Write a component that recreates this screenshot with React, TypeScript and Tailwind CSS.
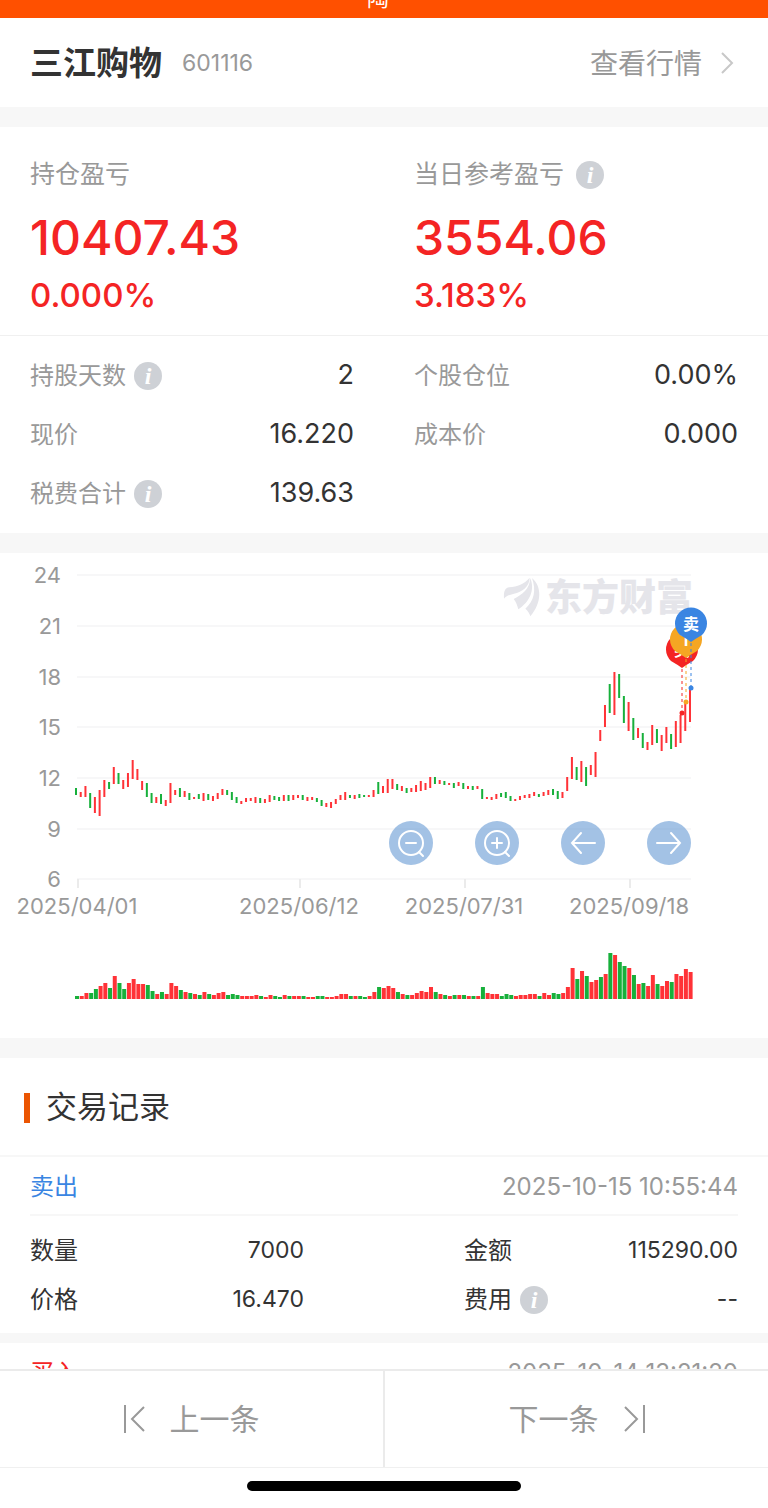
import type { ReactNode } from 'react'

type Trend = 'r' | 'g'

// [trend, high, low] for each trading day, in chart units
const CANDLES: [Trend, number, number][] = [
  ['g', 788, 795], ['r', 792, 797], ['r', 786, 797], ['g', 793, 808], ['r', 797, 813], ['r', 790, 816],
  ['r', 780, 797], ['g', 782, 789], ['r', 767, 784], ['g', 773, 784], ['r', 780, 789], ['r', 773, 787],
  ['r', 760, 779], ['r', 769, 780], ['r', 781, 790], ['g', 783, 797], ['g', 793, 803], ['r', 797, 803],
  ['g', 794, 804], ['r', 800, 806], ['r', 783, 803], ['r', 790, 795], ['g', 788, 797], ['r', 791, 797],
  ['g', 793, 800], ['r', 797, 799], ['g', 794, 799], ['r', 793, 801], ['g', 794, 800], ['r', 796, 801],
  ['r', 793, 799], ['r', 789, 795], ['g', 790, 795], ['g', 792, 800], ['g', 797, 803], ['r', 801, 804],
  ['r', 798, 802], ['r', 798, 801], ['r', 797, 803], ['g', 798, 803], ['r', 799, 803], ['r', 795, 802],
  ['g', 796, 800], ['g', 797, 801], ['r', 795, 801], ['g', 795, 801], ['r', 795, 800], ['r', 795, 798],
  ['g', 795, 800], ['r', 797, 801], ['r', 797, 800], ['g', 798, 802], ['g', 800, 806], ['r', 803, 807],
  ['r', 802, 808], ['r', 799, 804], ['r', 795, 800], ['r', 792, 800], ['g', 795, 798], ['r', 795, 799],
  ['g', 794, 798], ['g', 795, 797], ['r', 795, 797], ['r', 790, 797], ['g', 782, 794], ['r', 786, 793],
  ['r', 779, 793], ['r', 779, 789], ['g', 784, 790], ['r', 786, 791], ['g', 788, 793], ['r', 788, 792],
  ['r', 785, 792], ['r', 781, 791], ['r', 783, 790], ['r', 777, 788], ['g', 777, 784], ['r', 780, 784],
  ['g', 781, 785], ['r', 783, 785], ['g', 783, 788], ['r', 782, 786], ['g', 783, 789], ['r', 786, 789],
  ['g', 786, 790], ['r', 786, 789], ['g', 789, 799], ['r', 797, 799], ['r', 797, 800], ['r', 794, 799],
  ['g', 793, 797], ['g', 792, 798], ['g', 796, 801], ['r', 799, 801], ['r', 796, 800], ['r', 795, 798],
  ['r', 794, 798], ['r', 792, 796], ['g', 794, 797], ['r', 792, 796], ['r', 790, 795], ['g', 789, 795],
  ['g', 791, 799], ['r', 792, 798], ['r', 777, 791], ['r', 757, 779], ['g', 767, 780], ['r', 761, 782],
  ['g', 767, 786], ['r', 765, 775], ['r', 752, 777], ['r', 730, 741], ['r', 705, 727], ['g', 684, 713],
  ['r', 672, 715], ['g', 674, 698], ['g', 696, 723], ['r', 702, 731], ['g', 718, 740], ['r', 728, 738],
  ['g', 733, 748], ['r', 742, 750], ['r', 725, 745], ['g', 729, 743], ['r', 735, 751], ['r', 727, 743],
  ['g', 734, 749], ['r', 721, 747], ['r', 715, 743], ['r', 702, 731], ['r', 688, 722],
]

// [trend, volume] for each trading day
const VOLUMES: [Trend, number][] = [
  ['g', 3], ['r', 3], ['r', 6], ['g', 6], ['g', 10], ['r', 13], ['r', 16], ['g', 11], ['r', 23], ['g', 16],
  ['g', 10], ['r', 16], ['r', 20], ['r', 15], ['r', 15], ['g', 14], ['g', 8], ['r', 5], ['g', 7], ['r', 5],
  ['r', 16], ['r', 13], ['g', 9], ['r', 7], ['g', 6], ['r', 5], ['g', 4], ['r', 7], ['g', 5], ['r', 4],
  ['r', 6], ['r', 7], ['g', 4], ['g', 5], ['g', 4], ['r', 3], ['r', 3], ['r', 3], ['r', 4], ['g', 3],
  ['r', 2], ['r', 4], ['g', 3], ['g', 2], ['r', 4], ['g', 3], ['r', 3], ['r', 3], ['g', 3], ['r', 2],
  ['r', 2], ['g', 3], ['g', 3], ['r', 2], ['r', 2], ['r', 3], ['r', 5], ['r', 5], ['g', 3], ['r', 3],
  ['g', 3], ['g', 2], ['r', 3], ['r', 7], ['g', 12], ['r', 11], ['r', 13], ['r', 11], ['g', 7], ['r', 5],
  ['g', 4], ['r', 4], ['r', 6], ['r', 8], ['r', 7], ['r', 12], ['g', 7], ['r', 5], ['g', 4], ['r', 3],
  ['g', 4], ['r', 4], ['g', 4], ['r', 3], ['g', 3], ['r', 3], ['g', 12], ['r', 6], ['r', 5], ['r', 5],
  ['g', 3], ['g', 5], ['g', 4], ['r', 3], ['r', 4], ['r', 4], ['r', 5], ['r', 5], ['g', 3], ['r', 6],
  ['r', 4], ['g', 6], ['g', 5], ['r', 6], ['r', 12], ['r', 31], ['g', 20], ['r', 28], ['g', 23], ['r', 17],
  ['r', 19], ['g', 22], ['r', 25], ['g', 46], ['r', 44], ['g', 37], ['g', 33], ['r', 31], ['g', 24], ['r', 15],
  ['g', 16], ['r', 13], ['r', 24], ['g', 15], ['r', 13], ['r', 18], ['g', 17], ['r', 25], ['r', 23], ['r', 30],
  ['r', 27],
]

const COLORS: Record<Trend, string> = { r: '#ff3237', g: '#17b03b' }

const Y_TICKS = [
  { label: '24', y: 575 },
  { label: '21', y: 626 },
  { label: '18', y: 677 },
  { label: '15', y: 727 },
  { label: '12', y: 778 },
  { label: '9', y: 829 },
  { label: '6', y: 879 },
]

const X_TICKS = [
  { label: '2025/04/01', x: 78 },
  { label: '2025/06/12', x: 300 },
  { label: '2025/07/31', x: 465 },
  { label: '2025/09/18', x: 630 },
]

// Trade markers, later ones are drawn on top
const MARKERS = [
  { label: '买', color: '#f42424', x: 682, y: 650, dot: 713 },
  { label: 'T', color: '#f5a623', x: 686, y: 640, dot: 702 },
  { label: '卖', color: '#3a85e2', x: 691, y: 624, dot: 688 },
]

function InfoButton({ label }: { label: string }) {
  return (
    <button
      type="button"
      aria-label={`${label}说明`}
      className="flex size-7 shrink-0 items-center justify-center rounded-full bg-[#ced1d6] font-['Liberation_Serif',serif] text-2xl leading-7 font-bold text-white italic"
    >
      i
    </button>
  )
}

function Divider({ className = 'h-5' }: { className?: string }) {
  return <div className={`${className} shrink-0 bg-[#f7f7f7]`} />
}

function Profit({ label, amount, rate, info }: { label: string; amount: string; rate: string; info?: boolean }) {
  return (
    <div className="text-[#f42424]">
      <div className="flex h-7 items-center gap-3 text-[25px] text-[#999]">
        {label}
        {info && <InfoButton label={label} />}
      </div>
      <div className="mt-4 text-5xl leading-[66px] font-medium">{amount}</div>
      <div className="mt-1 text-[33px] leading-10 font-medium">{rate}</div>
    </div>
  )
}

function Stat({ label, value, info }: { label: string; value: string; info?: boolean }) {
  return (
    <div className="flex h-[59px] items-center justify-between">
      <dt className="flex items-center gap-2 text-2xl text-[#999]">
        {label}
        {info && <InfoButton label={label} />}
      </dt>
      <dd className="text-[27px] text-[#333]">{value}</dd>
    </div>
  )
}

function TradeField({ label, value, info }: { label: string; value: string; info?: boolean }) {
  return (
    <div className="flex h-[49px] items-center justify-between text-[#333]">
      <dt className="flex items-center gap-2 text-2xl">
        {label}
        {info && <InfoButton label={label} />}
      </dt>
      <dd className="text-[23px]">{value}</dd>
    </div>
  )
}

function Trade({ side, time, children }: { side: 'buy' | 'sell'; time: string; children?: ReactNode }) {
  return (
    <article className="px-[30px]">
      <div className="flex h-[59px] items-center justify-between border-b-2 border-[#f7f7f7] pt-[2px] text-2xl">
        <span className={side === 'sell' ? 'text-[#3a85e2]' : 'text-[#f42424]'}>{side === 'sell' ? '卖出' : '买入'}</span>
        <time className="text-[#999]">{time}</time>
      </div>
      <dl className="grid grid-cols-2 gap-x-[160px] pt-[10px] pb-[9px]">{children}</dl>
    </article>
  )
}

function ChartButton({ label, children }: { label: string; children: ReactNode }) {
  return (
    <button type="button" aria-label={label} className="size-11 rounded-full bg-[#6699d4]/60">
      <svg viewBox="0 0 44 44" className="size-11" fill="none" stroke="white" strokeWidth={2} strokeLinecap="round">
        {children}
      </svg>
    </button>
  )
}

function PriceChart() {
  return (
    <svg viewBox="0 553 768 485" className="block w-full" role="img" aria-label="股价走势">
      {/* Grid and axes */}
      {Y_TICKS.map(tick => (
        <g key={tick.label}>
          <line x1={77} x2={691} y1={tick.y} y2={tick.y} stroke="#f7f7f8" strokeWidth={2} />
          <text x={61} y={tick.y + 8} textAnchor="end" fontSize={22} fill="#999">{tick.label}</text>
        </g>
      ))}
      {X_TICKS.map(tick => (
        <g key={tick.label}>
          <line x1={tick.x} x2={tick.x} y1={879} y2={888} stroke="#ebebeb" strokeWidth={2} />
          <text x={tick.x - 1} y={914} textAnchor="middle" fontSize={22} fill="#999">{tick.label}</text>
        </g>
      ))}

      {/* Watermark */}
      <g fill="#e5e5ea">
        <g transform="translate(480 560) scale(0.3333)">
          <path d="M72 116 C71 100 72 84 88 82 C112 79 132 73 149 53 C149 80 126 96 102 101 C86 105 77 109 72 116 Z" />
          <path d="M101 117 C128 103 148 88 151 55 C166 91 148 127 115 148 C112 136 108 125 101 117 Z" />
          <path d="M156 54 C186 79 186 128 151 169 C149 160 143 152 136 146 C163 122 169 91 156 54 Z" />
        </g>
        <text x={545} y={611} fontSize={37} fontWeight={900}>东方财富</text>
      </g>

      {/* Candles */}
      {CANDLES.map(([trend, high, low], i) => (
        <rect key={i} x={75 + i * 4.723} y={high} width={2} height={low - high} fill={COLORS[trend]} />
      ))}

      {/* Volume */}
      {VOLUMES.map(([trend, height], i) => (
        <rect key={i} x={75 + i * 4.72} y={999 - height} width={4} height={height} fill={COLORS[trend]} />
      ))}

      {/* Trade markers */}
      {MARKERS.map(({ label, color, x, y, dot }) => (
        <g key={label}>
          <path d={`M${x - 11} ${y + 11} A16 16 0 1 1 ${x + 11} ${y + 11} Q${x + 4} ${y + 15} ${x} ${y + 18} Q${x - 4} ${y + 15} ${x - 11} ${y + 11} Z`} fill={color} />
          <text x={x} y={y + 6} textAnchor="middle" fontSize={16} fontWeight={700} fill="white">{label}</text>
          <line x1={x} x2={x} y1={y + 19} y2={dot} stroke={color} strokeDasharray="3 3" />
          <circle cx={x} cy={dot} r={2.5} fill={color} />
        </g>
      ))}
    </svg>
  )
}

export default function App() {
  return (
    <div className="flex h-screen flex-col bg-white font-['Inter','Noto_Sans_CJK_SC',sans-serif]">
      <header className="flex h-[18px] shrink-0 items-end justify-center bg-[#ff5000] pr-3 pb-2 text-[22px] leading-6 text-white">
        陶
      </header>

      <main className="min-h-0 flex-1 overflow-hidden">
        <section className="flex h-[89px] items-center justify-between px-[30px] pt-[2px]">
          <div className="flex items-center gap-5">
            <h1 className="text-[33px] font-bold text-[#333]">三江购物</h1>
            <span className="text-[23px] text-[#999]">601116</span>
          </div>
          <a href="#quote" className="flex items-center gap-4 text-[28px] text-[#999]">
            查看行情
            <svg viewBox="0 0 20 24" className="h-6 w-5" fill="none" stroke="#c8c8c8" strokeWidth={2}>
              <path d="M4 1 L14 11 L4 21" />
            </svg>
          </a>
        </section>
        <Divider />

        <section className="grid grid-cols-2 gap-x-[60px] border-b border-[#f0f0f0] px-[30px] pt-[34px] pb-5">
          <Profit label="持仓盈亏" amount="10407.43" rate="0.000%" />
          <Profit label="当日参考盈亏" amount="3554.06" rate="3.183%" info />
        </section>

        <dl className="grid grid-cols-2 gap-x-[60px] px-[30px] py-[10px]">
          <Stat label="持股天数" value="2" info />
          <Stat label="个股仓位" value="0.00%" />
          <Stat label="现价" value="16.220" />
          <Stat label="成本价" value="0.000" />
          <Stat label="税费合计" value="139.63" info />
        </dl>
        <Divider />

        <section className="relative">
          <PriceChart />
          <div className="absolute top-[268px] right-[77px] flex gap-[42px]">
            <ChartButton label="缩小">
              <circle cx={22} cy={22} r={12} />
              <path d="M17 22 H27 M30 31 L34 35" />
            </ChartButton>
            <ChartButton label="放大">
              <circle cx={22} cy={22} r={12} />
              <path d="M17 22 H27 M22 17 V27 M30 31 L34 35" />
            </ChartButton>
            <ChartButton label="向左">
              <path d="M34 22 H11 M20 12 L11 22 L20 32" />
            </ChartButton>
            <ChartButton label="向右">
              <path d="M10 22 H33 M24 12 L33 22 L24 32" />
            </ChartButton>
          </div>
        </section>
        <Divider />

        <section>
          <div className="flex h-[99px] items-center gap-4 border-b-2 border-[#f7f7f7] px-6 pt-[2px]">
            <span className="h-[30px] w-[6px] bg-[#eb5502]" />
            <h2 className="text-[31px] text-[#333]">交易记录</h2>
          </div>
          <Trade side="sell" time="2025-10-15 10:55:44">
            <TradeField label="数量" value="7000" />
            <TradeField label="金额" value="115290.00" />
            <TradeField label="价格" value="16.470" />
            <TradeField label="费用" value="--" info />
          </Trade>
          <Divider className="h-[10px]" />
          <Trade side="buy" time="2025-10-14 13:21:20" />
        </section>
      </main>

      <footer className="shrink-0 border-t-2 border-[#ebebeb] bg-white">
        <nav className="flex h-[97px] border-b border-[#f0f0f0] text-[30px] text-[#999]">
          <button type="button" className="flex flex-1 items-center justify-center gap-6">
            <svg viewBox="0 0 22 30" className="h-[30px] w-[22px]" fill="none" stroke="currentColor" strokeWidth={2}>
              <path d="M1 1 V29 M20 3 L8 15 L20 27" />
            </svg>
            上一条
          </button>
          <button type="button" className="flex flex-1 items-center justify-center gap-6 border-l-2 border-[#ebebeb]">
            下一条
            <svg viewBox="0 0 22 30" className="h-[30px] w-[22px]" fill="none" stroke="currentColor" strokeWidth={2}>
              <path d="M21 1 V29 M2 3 L14 15 L2 27" />
            </svg>
          </button>
        </nav>
        <div className="flex h-10 items-start justify-center pt-[13px]">
          <div className="h-[10px] w-[274px] rounded-full bg-black" />
        </div>
      </footer>
    </div>
  )
}
